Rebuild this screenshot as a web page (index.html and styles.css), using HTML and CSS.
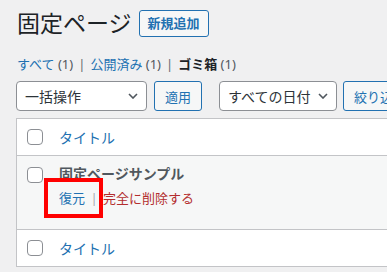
FILE: index.html
```html
<!DOCTYPE html>
<html lang="ja">
<head>
    <meta charset="UTF-8">
    <meta name="viewport" content="width=device-width, initial-scale=1.0">
    <title>固定ページ</title>
    <link rel="stylesheet" href="styles.css">
</head>
<body>
    <div class="wrap">
        <div class="page-head">
            <h1 class="page-title">固定ページ</h1>
            <a class="title-action" href="#">新規追加</a>
        </div>

        <ul class="subsubsub">
            <li><a href="#">すべて <span class="count">(1)</span></a><span class="sep">|</span></li>
            <li><a href="#">公開済み <span class="count">(1)</span></a><span class="sep">|</span></li>
            <li><a href="#" class="current">ゴミ箱 <span class="count">(1)</span></a></li>
        </ul>

        <div class="tablenav">
            <div class="select bulk">
                <span>一括操作</span>
                <svg class="chevron" viewBox="0 0 10 6"><polyline points="1,1 5,5 9,1"/></svg>
            </div>
            <button class="button">適用</button>
            <div class="select dates">
                <span>すべての日付</span>
                <svg class="chevron" viewBox="0 0 10 6"><polyline points="1,1 5,5 9,1"/></svg>
            </div>
            <button class="button">絞り込み</button>
        </div>

        <div class="list-table">
            <div class="row head-row">
                <span class="check"></span>
                <a href="#" class="col-title">タイトル</a>
            </div>
            <div class="row item-row">
                <span class="check"></span>
                <div class="item-body">
                    <strong class="item-title">固定ページサンプル</strong>
                    <div class="row-actions">
                        <a href="#" class="untrash">復元</a>
                        <span class="sep">|</span>
                        <a href="#" class="delete">完全に削除する</a>
                    </div>
                    <!-- annotation highlight -->
                    <div class="highlight"></div>
                </div>
            </div>
            <div class="row foot-row">
                <span class="check"></span>
                <a href="#" class="col-title">タイトル</a>
            </div>
        </div>
    </div>
</body>
</html>
```

FILE: styles.css
```css
body {
    margin: 0;
    font-family: 'Noto Sans', 'Noto Sans CJK JP', sans-serif;
    background-color: #f0f0f1;
    color: #3c434a;
    font-size: 13px;
    overflow: hidden;
}
a {
    color: #2271b1;
    text-decoration: none;
}
.wrap {
    padding-left: 16px;
    width: 420px;
}
.page-head {
    display: flex;
    align-items: center;
    padding-top: 8px;
    height: 30px;
}
.page-title {
    margin: 0 0 0 1px;
    font-size: 23px;
    font-weight: 400;
    line-height: 30px;
    color: #1d2327;
}
.title-action {
    margin-left: 7px;
    height: 25px;
    padding: 0 8px;
    border: 1px solid #2271b1;
    border-radius: 3px;
    background: #f6f7f7;
    font-size: 13px;
    font-weight: 700;
    line-height: 25px;
}
.subsubsub {
    list-style: none;
    margin: 16px 0 0 1px;
    padding: 0;
    display: flex;
    line-height: 20px;
    font-size: 13px;
}
.subsubsub .sep {
    color: #646970;
    margin: 0 5px;
}
.subsubsub .count {
    color: #50575e;
}
.subsubsub .current {
    color: #1d2327;
    font-weight: 700;
}
.subsubsub .current .count {
    font-weight: 400;
}
.tablenav {
    display: flex;
    align-items: center;
    margin-top: 7px;
    height: 30px;
}
.select {
    box-sizing: border-box;
    height: 30px;
    display: flex;
    align-items: center;
    justify-content: space-between;
    padding: 0 8px;
    border: 1px solid #8c8f94;
    border-radius: 4px;
    background: #fff;
    font-size: 14px;
    color: #2c3338;
}
.select.bulk {
    width: 131px;
    margin-right: 7px;
}
.select.dates {
    width: 118px;
    margin: 0 6px 0 17px;
}
.chevron {
    width: 10px;
    height: 6px;
    fill: none;
    stroke: #50575e;
    stroke-width: 1.6;
}
.button {
    box-sizing: border-box;
    height: 30px;
    padding: 0 10px;
    border: 1px solid #2271b1;
    border-radius: 3px;
    background: #f6f7f7;
    color: #2271b1;
    font-family: inherit;
    font-size: 13px;
    white-space: nowrap;
}
.list-table {
    margin-top: 7px;
    background: #fff;
    border: 1px solid #c3c4c7;
}
.row {
    display: flex;
    align-items: center;
    gap: 16px;
    padding: 0 10px;
    height: 36px;
}
.head-row {
    border-bottom: 1px solid #c3c4c7;
}
.foot-row {
    border-top: 1px solid #c3c4c7;
}
.item-row {
    align-items: flex-start;
    height: auto;
    padding-top: 8px;
    padding-bottom: 21px;
    background: #f6f7f7;
}
.item-row .check {
    margin-top: 3px;
}
.check {
    box-sizing: border-box;
    flex: none;
    width: 16px;
    height: 16px;
    border: 1px solid #8c8f94;
    border-radius: 4px;
    background: #fff;
}
.col-title {
    font-size: 14px;
}
.item-body {
    position: relative;
}
.item-title {
    display: block;
    font-size: 14px;
    font-weight: 700;
    line-height: 20px;
    color: #50575e;
}
.row-actions {
    margin-top: 4px;
    line-height: 20px;
    font-size: 13px;
}
.row-actions .sep {
    color: #a7aaad;
    margin: 0 2px;
}
.row-actions .delete {
    color: #b32d2e;
}
.highlight {
    position: absolute;
    left: -15px;
    top: 14px;
    width: 51px;
    height: 32px;
    border: 4px solid #f00;
}
```
